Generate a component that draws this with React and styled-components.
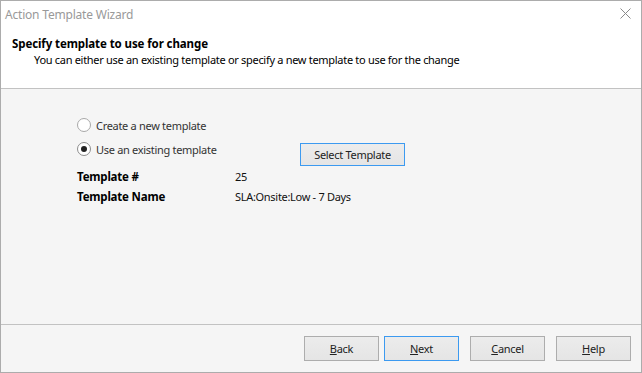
import React from 'react';
import styled, { createGlobalStyle } from 'styled-components';

const Global = createGlobalStyle`
  html, body {
    margin: 0;
    padding: 0;
    background: #fff;
  }
  body {
    font-family: "Noto Sans", "Open Sans", sans-serif;
    font-size: 11px;
    letter-spacing: -0.3px;
    color: #1a1a1a;
  }
`

const Window = styled.div`
  width: 642px;
  height: 373px;
  box-sizing: border-box;
  border: 1px solid #acacac;
  display: flex;
  flex-direction: column;
  background: #fff;
  overflow: hidden;
`

const TitleBar = styled.div`
  height: 27px;
  display: flex;
  align-items: center;
  justify-content: space-between;
  padding: 0 10px 0 4px;
  color: #999;
  font-size: 12px;
  letter-spacing: -0.2px;
`

const Close = styled.svg`
  width: 11px;
  height: 11px;
  margin-top: -2px;
`

const Header = styled.div`
  height: 61px;
  border-bottom: 1px solid #c2c2c2;
  padding: 8px 0 0 11px;
  box-sizing: border-box;
`

const Heading = styled.div`
  font-weight: bold;
  font-size: 11.5px;
  letter-spacing: -0.1px;
  color: #000;
  line-height: 16px;
`

const SubHeading = styled.div`
  padding-left: 22px;
  color: #000;
  line-height: 16px;
`

const Body = styled.div`
  flex: 1;
  background: #f5f5f5;
  padding: 27px 0 0 76px;
  display: flex;
  flex-direction: column;
`

const RadioRow = styled.label`
  display: flex;
  align-items: flex-start;
  height: 24px;
`

const RadioText = styled.div`
  display: flex;
  align-items: center;
  gap: 5px;
  width: 223px;
  height: 18px;
  color: #333;
`

const RadioCircle = styled.span`
  width: 12px;
  height: 12px;
  border-radius: 50%;
  border: 1px solid ${p => (p.$checked ? '#8c8c8c' : '#a8a8a8')};
  background: #fff;
  display: flex;
  align-items: center;
  justify-content: center;
  &::after {
    content: '';
    width: 6px;
    height: 6px;
    border-radius: 50%;
    background: ${p => (p.$checked ? '#222' : 'transparent')};
  }
`

const Button = styled.button`
  font-family: inherit;
  font-size: 11px;
  letter-spacing: -0.3px;
  color: #222;
  width: ${p => p.$w || 75}px;
  height: ${p => p.$h || 25}px;
  margin-top: ${p => p.$mt || 0}px;
  box-sizing: border-box;
  border: 1px solid ${p => (p.$focus ? '#3c9af0' : '#adadad')};
  background: linear-gradient(#ececec, #e5e5e5);
  padding: 0;
  u {
    text-decoration: underline;
  }
`

const Fields = styled.div`
  display: grid;
  grid-template-columns: 158px auto;
  row-gap: 4px;
  margin-top: 5px;
  line-height: 16px;
`

const FieldLabel = styled.div`
  font-weight: bold;
  font-size: 11.5px;
  letter-spacing: -0.2px;
  color: #000;
`

const FieldValue = styled.div`
  color: #111;
`

const Footer = styled.div`
  height: 48px;
  border-top: 1px solid #c2c2c2;
  background: #f5f5f5;
  display: flex;
  justify-content: flex-end;
  align-items: flex-start;
  padding: 11px 10px 0 0;
  box-sizing: border-box;
  gap: 11px;
`

const Pair = styled.div`
  display: flex;
  gap: 5px;
`

export default function App() {
  return (
    <>
      <Global />
      <Window>
        <TitleBar>
          <span>Action Template Wizard</span>
          <Close viewBox="0 0 11 11">
            <path d="M0.5 0.5 L10.5 10.5 M10.5 0.5 L0.5 10.5" stroke="#8a8a8a" strokeWidth="1" fill="none" />
          </Close>
        </TitleBar>
        <Header>
          <Heading>Specify template to use for change</Heading>
          <SubHeading>You can either use an existing template or specify a new template to use for the change</SubHeading>
        </Header>
        <Body>
          <RadioRow>
            <RadioText>
              <RadioCircle />
              Create a new template
            </RadioText>
          </RadioRow>
          <RadioRow>
            <RadioText>
              <RadioCircle $checked />
              Use an existing template
            </RadioText>
            <Button $w={105} $h={23} $mt={3} $focus>Select Template</Button>
          </RadioRow>
          <Fields>
            <FieldLabel>Template #</FieldLabel>
            <FieldValue>25</FieldValue>
            <FieldLabel>Template Name</FieldLabel>
            <FieldValue>SLA:Onsite:Low - 7 Days</FieldValue>
          </Fields>
        </Body>
        <Footer>
          <Pair>
            <Button><u>B</u>ack</Button>
            <Button $focus><u>N</u>ext</Button>
          </Pair>
          <Button><u>C</u>ancel</Button>
          <Button><u>H</u>elp</Button>
        </Footer>
      </Window>
    </>
  );
}
